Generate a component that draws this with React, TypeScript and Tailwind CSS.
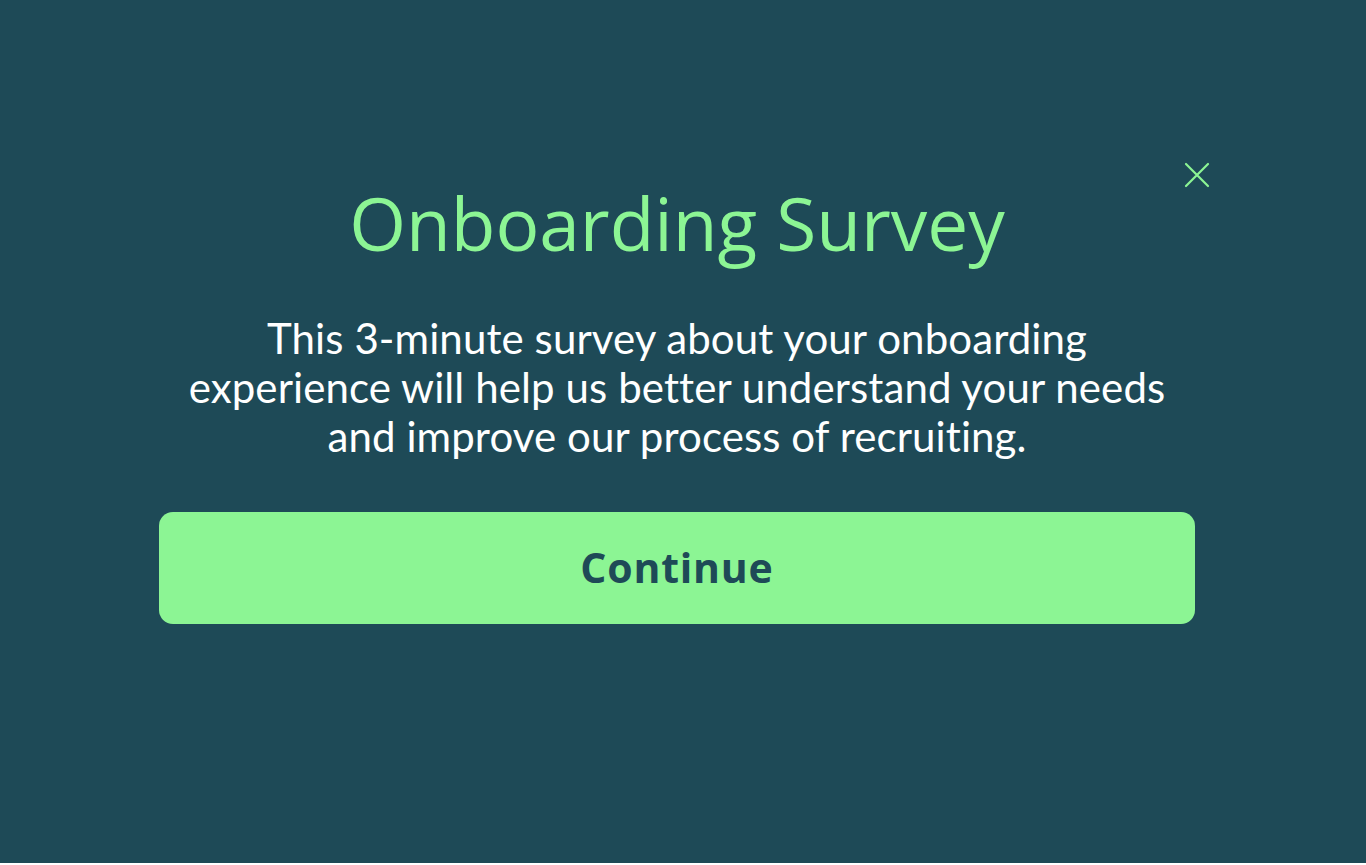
import React from "react";

export default function App() {
  return (
    <div className="w-[1366px] h-[865px] bg-white">
      <div className="relative h-[863px] bg-[#1e4a57] pl-[159px] pr-[171px] pt-[175px]">
        <button className="absolute left-[1182px] top-[160px] w-[30px] h-[30px] flex items-center justify-center">
          <svg width="28" height="28" viewBox="0 0 28 28" fill="none" stroke="#8cf594" strokeWidth="2.2" strokeLinecap="round">
            <path d="M3 3 L25 25 M25 3 L3 25" />
          </svg>
        </button>
        <h1 className="text-center text-[#8cf594] text-[73px] leading-[96px] font-normal" style={{ fontFamily: '"Open Sans", sans-serif' }}>
          Onboarding Survey
        </h1>
        <p className="mt-[43px] text-center text-white text-[42px] leading-[49px] tracking-[0.1px] [font-variant-ligatures:none]" style={{ fontFamily: 'Lato, sans-serif' }}>
          This 3-minute survey about your onboarding<br />
          experience will help us better understand your needs<br />
          and improve our process of recruiting.
        </p>
        <button className="mt-[51px] w-full h-[112px] rounded-[14px] bg-[#8cf594] text-[#1e4a57] text-[41px] tracking-[0.8px] font-bold flex items-center justify-center" style={{ fontFamily: '"Open Sans", sans-serif' }}>
          Continue
        </button>
      </div>
    </div>
  );
}
